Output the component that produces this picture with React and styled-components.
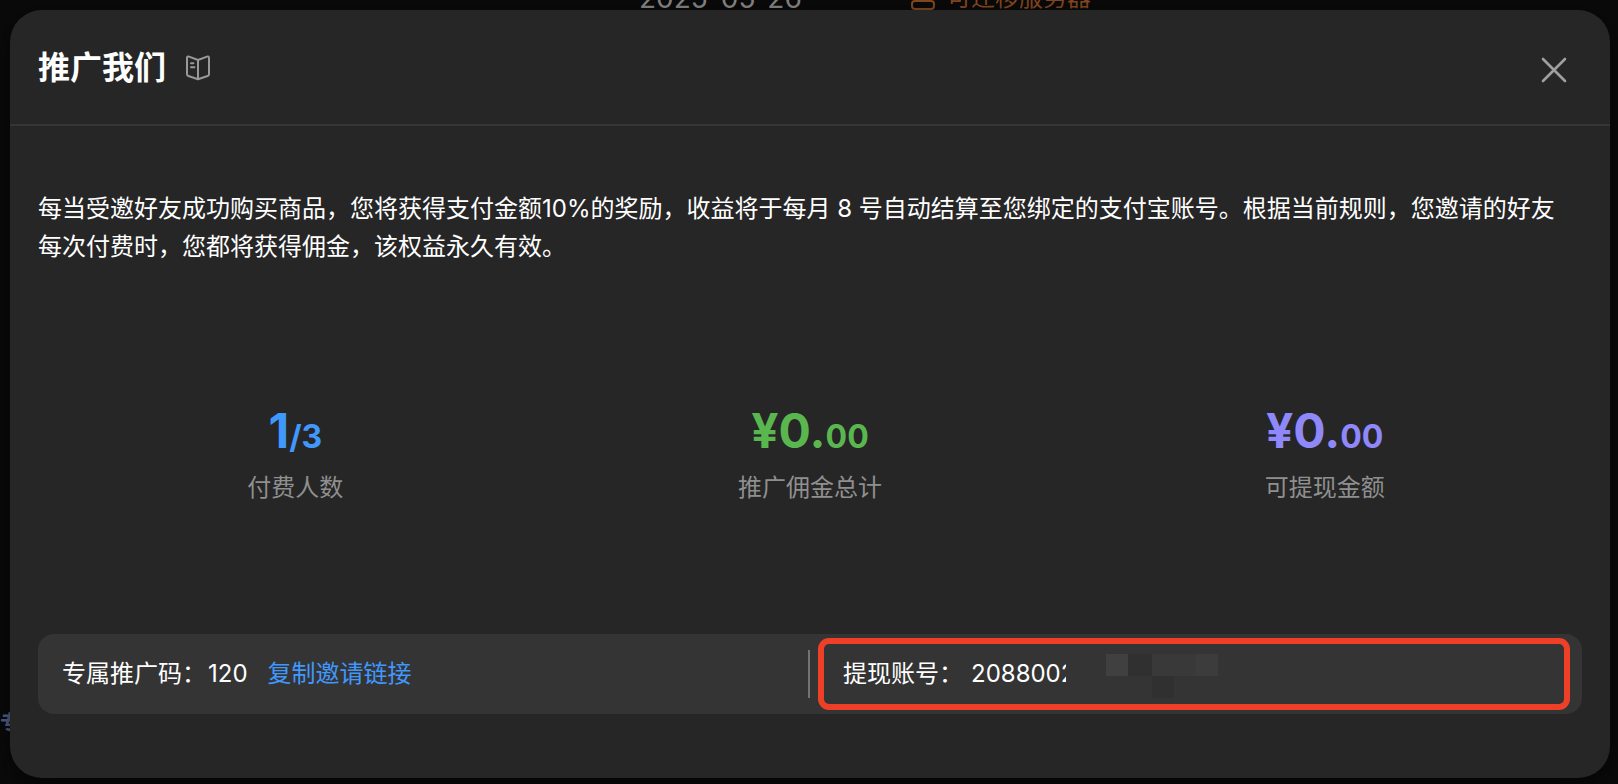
import React from 'react';
import styled, { createGlobalStyle } from 'styled-components';

const GlobalStyle = createGlobalStyle`
    * {
        box-sizing: border-box;
    }

    body {
        margin: 0;
        background-color: #0a0a0a;
        color: #ffffff;
        font-family: Inter, 'Noto Sans CJK SC', sans-serif;
        font-size: 24px;
        line-height: 38px;
        overflow: hidden;
    }
`;

// Страница под модальным окном
const Page = styled.div`
    position: relative;
    min-height: 100vh;
`;

const Behind = styled.div`
    position: absolute;
    display: flex;
    align-items: center;
    white-space: nowrap;
`;

const OrderDate = styled(Behind)`
    left: 639px;
    top: -21px;
    color: #8a8a8a;
    font-size: 28px;
`;

const ServerTag = styled(Behind)`
    left: 908px;
    top: -21px;
    gap: 11px;
    color: #8a4a1f;
`;

const SideLabel = styled(Behind)`
    left: 0;
    top: 704px;
    color: #56648a;
    font-size: 22px;
    font-weight: 700;
`;

const Overlay = styled.div`
    position: relative;
    padding: 10px 8px 6px 10px;
`;

const Modal = styled.section`
    background-color: #262626;
    border-radius: 32px;
    box-shadow: 0 6px 24px rgba(0, 0, 0, 0.6);
`;

const Header = styled.header`
    display: flex;
    align-items: center;
    gap: 19px;
    height: 116px;
    padding: 2px 42px 0 28px;
    border-bottom: 2px solid #363636;
`;

const Title = styled.h1`
    margin: 0;
    font-size: 32px;
    font-weight: 700;
    line-height: 48px;
`;

const IconButton = styled.button`
    display: flex;
    padding: 0;
    border: 0;
    background: none;
    color: #999999;
    cursor: pointer;
`;

const CloseButton = styled(IconButton)`
    margin-left: auto;
    padding-top: 4px;
    color: #a0a0a0;
`;

const Body = styled.div`
    padding: 64px 28px;
`;

const Description = styled.p`
    margin: 0;
    padding-right: 16px;
`;

const Stats = styled.dl`
    display: grid;
    grid-template-columns: repeat(3, 1fr);
    margin: 133px 0 126px;
`;

const Stat = styled.div`
    display: flex;
    flex-direction: column-reverse;
    align-items: center;
`;

const StatValue = styled.dd`
    margin: 0;
    color: ${({ $color }) => $color};
    font-size: 48px;
    font-weight: 700;
    line-height: 64px;

    small {
        font-size: 32px;
        line-height: 1;
    }
`;

const StatLabel = styled.dt`
    margin-top: 5px;
    color: #8f8f8f;
    line-height: 40px;
`;

const InfoBar = styled.div`
    display: grid;
    grid-template-columns: 1fr 1fr;
    align-items: center;
    height: 80px;
    border-radius: 16px;
    background-color: #343434;
`;

const PromoCode = styled.div`
    display: flex;
    align-items: center;
    height: 48px;
    padding-left: 24px;
    border-right: 2px solid #737373;
`;

const Code = styled.span`
    margin: 0 20px 0 2px;
`;

const CopyLink = styled.a`
    color: #4098fc;
    text-decoration: none;
`;

const Account = styled.div`
    display: flex;
    align-items: center;
    height: 72px;
    margin: 0 12px 0 8px;
    padding-left: 19px;
    border: 6px solid #ee4026;
    border-radius: 11px;
`;

const AccountNumber = styled.span`
    display: flex;
    margin-left: 8px;
`;

// Последняя видимая цифра счёта обрезана маской
const CutDigit = styled.span`
    width: 5px;
    overflow: hidden;
`;

const Mosaic = styled.svg`
    margin: 4px 0 0 40px;
`;

const stats = [
    { label: '付费人数', main: '1', rest: '/3', color: '#4098fc' },
    { label: '推广佣金总计', main: '¥0.', rest: '00', color: '#5ab64f' },
    { label: '可提现金额', main: '¥0.', rest: '00', color: '#8f88fa' },
];

const BookIcon = () => (
    <svg width="26" height="26" viewBox="0 0 26 26" fill="none" stroke="currentColor" strokeWidth="2" strokeLinecap="round" strokeLinejoin="round">
        <path d="M13 5 L4 1.6 Q2 .9 2 3 V19 Q2 20.6 3.4 21 L13 24.2 L22.6 21 Q24 20.6 24 19 V3 Q24 .9 22 1.6 Z" />
        <path d="M13 5 V24 M6 8.2 H8.4 M6 12.2 H9.4" />
    </svg>
);

const CloseIcon = () => (
    <svg width="28" height="28" viewBox="0 0 28 28" fill="none" stroke="currentColor" strokeWidth="2.6" strokeLinecap="round">
        <path d="M3 3 L25 25 M25 3 L3 25" />
    </svg>
);

const ServerIcon = () => (
    <svg width="28" height="28" viewBox="0 0 28 28" fill="none" stroke="currentColor" strokeWidth="2">
        <rect x="4" y="3" width="22" height="8" rx="3" />
        <rect x="4" y="17" width="22" height="8" rx="3" />
    </svg>
);

const App = () => {
    return (
        <>
            <GlobalStyle />
            <Page>
                <OrderDate>2025-05-26</OrderDate>
                <ServerTag>
                    <ServerIcon />
                    可迁移服务器
                </ServerTag>
                <SideLabel>专</SideLabel>

                <Overlay>
                    <Modal role="dialog" aria-labelledby="promo-title">
                        <Header>
                            <Title id="promo-title">推广我们</Title>
                            <IconButton type="button" aria-label="说明">
                                <BookIcon />
                            </IconButton>
                            <CloseButton type="button" aria-label="关闭">
                                <CloseIcon />
                            </CloseButton>
                        </Header>

                        <Body>
                            <Description>
                                每当受邀好友成功购买商品，您将获得支付金额10%的奖励，收益将于每月 8 号自动结算至您绑定的支付宝账号。根据当前规则，您邀请的好友每次付费时，您都将获得佣金，该权益永久有效。
                            </Description>

                            <Stats>
                                {stats.map(({ label, main, rest, color }) => (
                                    <Stat key={label}>
                                        <StatLabel>{label}</StatLabel>
                                        <StatValue $color={color}>
                                            {main}
                                            <small>{rest}</small>
                                        </StatValue>
                                    </Stat>
                                ))}
                            </Stats>

                            <InfoBar>
                                <PromoCode>
                                    专属推广码：
                                    <Code>120</Code>
                                    <CopyLink href="#invite">复制邀请链接</CopyLink>
                                </PromoCode>
                                <Account>
                                    <span>提现账号：</span>
                                    <AccountNumber>
                                        208800<CutDigit>2</CutDigit>
                                    </AccountNumber>
                                    <Mosaic width="112" height="44" viewBox="0 0 112 44" aria-hidden="true">
                                        <rect width="22" height="22" fill="#404040" />
                                        <rect x="22" width="24" height="22" fill="#303030" />
                                        <rect x="46" width="44" height="22" fill="#393939" />
                                        <rect x="90" width="22" height="22" fill="#3c3c3c" />
                                        <rect x="46" y="22" width="22" height="22" fill="#303030" />
                                    </Mosaic>
                                </Account>
                            </InfoBar>
                        </Body>
                    </Modal>
                </Overlay>
            </Page>
        </>
    );
};

export default App;
